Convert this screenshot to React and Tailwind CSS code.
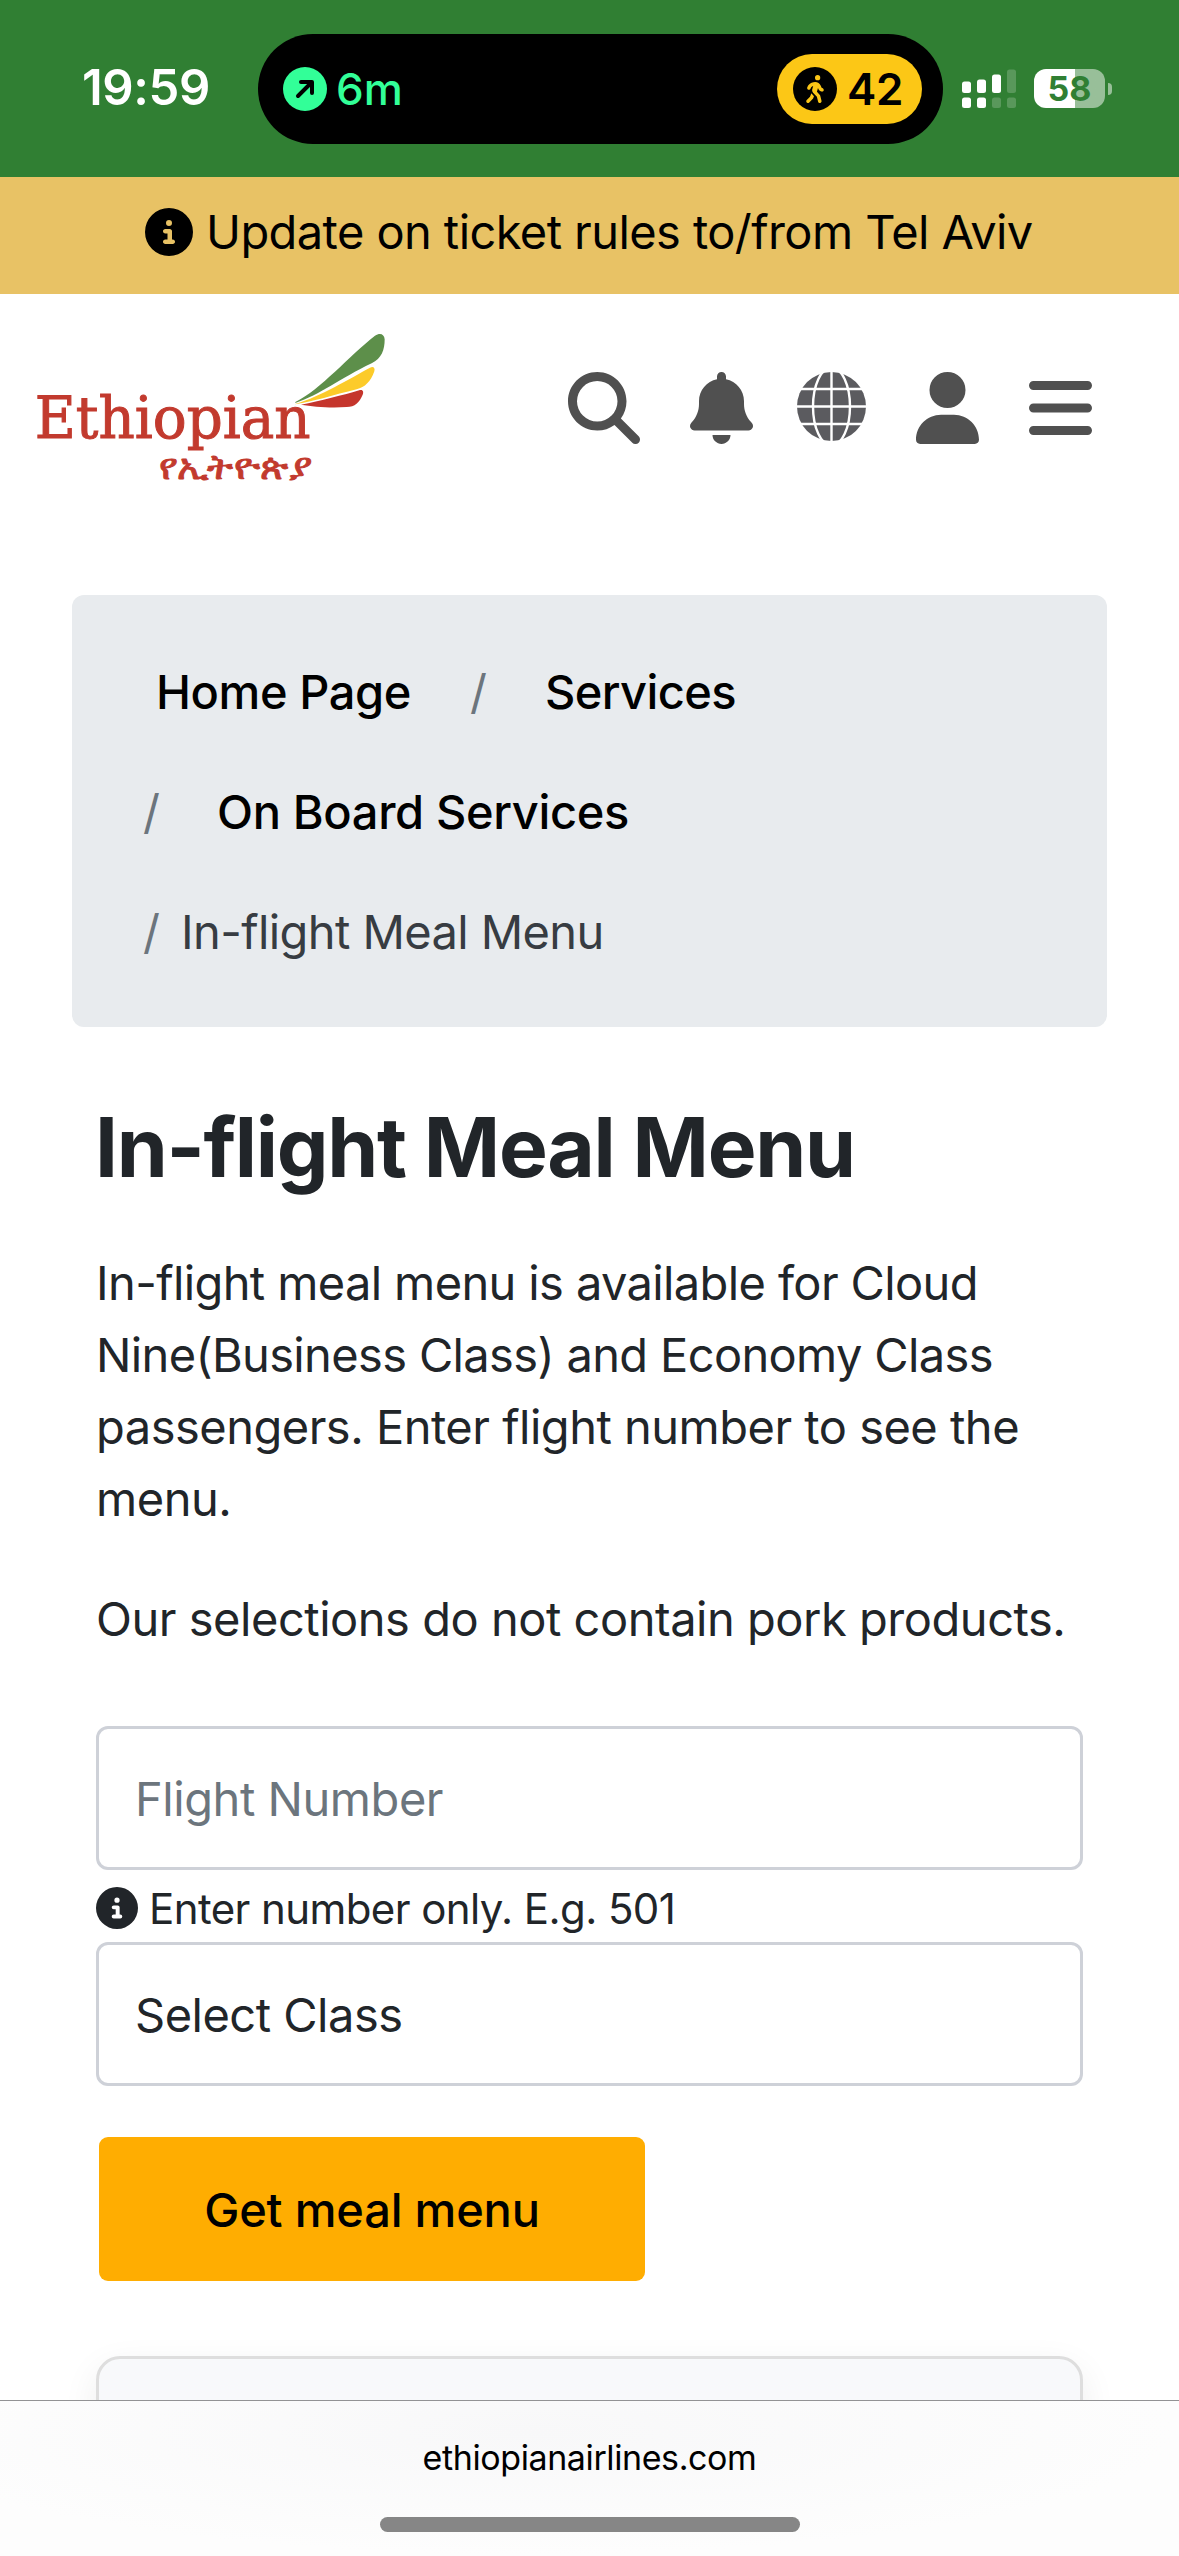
import { FaBars, FaBell, FaCircleInfo, FaMagnifyingGlass, FaPersonWalking, FaUser } from 'react-icons/fa6';

function SignalIcon() {
  return (
    <svg width="54" height="40" viewBox="0 0 54 40" fill="#fff" className="ml-[19px]">
      <rect x="0" y="12.5" width="9" height="11.5" rx="2.5" />
      <rect x="15" y="10.5" width="9" height="13.5" rx="2.5" />
      <rect x="30" y="5.5" width="9" height="18.5" rx="2.5" />
      <rect x="45" y="0.5" width="9" height="23.5" rx="2.5" opacity="0.2" />
      <rect x="0" y="28.5" width="9" height="10.5" rx="2.5" />
      <rect x="15" y="28.5" width="9" height="10.5" rx="2.5" />
      <rect x="30" y="28.5" width="9" height="10.5" rx="2.5" opacity="0.2" />
      <rect x="45" y="28.5" width="9" height="10.5" rx="2.5" opacity="0.2" />
    </svg>
  );
}

function StatusBar() {
  return (
    <div className="flex h-[177px] shrink-0 items-center bg-[#307f33]">
      <div className="w-[258px] pb-[2px] pl-[82px] text-[49px] leading-none font-semibold tracking-[-0.4px] text-white">19:59</div>

      <div className="mt-px flex h-[110px] w-[685px] items-center justify-between rounded-full bg-black pr-[21px] pl-[25px]">
        <div className="flex items-center gap-[9px]">
          <div className="flex h-[44px] w-[44px] items-center justify-center rounded-full bg-[#32ff98]">
            <svg width="20" height="20" viewBox="0 0 20 20" fill="none" stroke="#000" strokeWidth="4" strokeLinecap="round" strokeLinejoin="round">
              <path d="M3 17L16.5 3.5M6 3H17V14" />
            </svg>
          </div>
          <span className="text-[44px] leading-none font-medium text-[#32ff98]">6m</span>
        </div>
        <div className="flex h-[70px] w-[145px] items-center gap-[10px] rounded-full bg-[#fcc716] pl-[16px]">
          <div className="flex h-[44px] w-[44px] items-center justify-center rounded-full bg-black text-[#fcc716]">
            <FaPersonWalking size={28} />
          </div>
          <span className="text-[44px] leading-none font-semibold tracking-[-0.3px] text-black">42</span>
        </div>
      </div>

      <SignalIcon />

      <div className="ml-[18px] flex h-[39px] w-[71px] items-center justify-center rounded-[12px] bg-linear-to-r from-white from-58% to-[#98bf99] to-58% text-[34px] leading-none font-bold text-[#307f33]">
        58
      </div>
      <div className="ml-[3px] h-[12px] w-[4px] rounded-r-full bg-[#98bf99]" />
    </div>
  );
}

function Logo() {
  return (
    <svg width="360" height="160" viewBox="90 90 1080 480">
      <path fill="#5d8f4a" d="M886 306C960 270 1050 165 1125 107C1140 97 1153 102 1154 118C1154 150 1145 175 1115 190C1020 235 960 285 886 309Z" />
      <path fill="#fccb2a" d="M886 312C960 290 1050 235 1110 203C1120 198 1126 204 1123 214C1112 245 1095 262 1070 268C1000 285 940 305 886 313Z" />
      <path fill="#c5352c" d="M903 314C960 303 1030 285 1080 270C1090 268 1091 277 1088 284C1078 308 1065 320 1040 321C990 325 940 320 903 314Z" />
      <text x="104" y="415" textLength="828" lengthAdjust="spacingAndGlyphs" className="fill-[#c23a2e] stroke-[#c23a2e] stroke-3 font-['DejaVu_Serif',serif] text-[171px]">Ethiopian</text>
      <text x="476" y="537" textLength="459" lengthAdjust="spacingAndGlyphs" className="fill-[#c23a2e] stroke-[#c23a2e] stroke-3 font-['Noto_Sans',sans-serif] text-[106px]">የኢትዮጵያ</text>
    </svg>
  );
}

function GlobeIcon() {
  return (
    <svg width="69" height="69" viewBox="0 0 69 69" className="mb-[3px] ml-[44px]">
      <circle cx="34.5" cy="34.5" r="34.5" fill="#5b5b5f" />
      <g fill="none" stroke="#fff" strokeWidth="2.4">
        <path d="M34.5 0V69M0 17H69M0 34.5H69M0 52H69" />
        <ellipse cx="34.5" cy="34.5" rx="18.5" ry="39" />
      </g>
    </svg>
  );
}

function Header() {
  return (
    <div className="flex h-[301px] shrink-0 items-start pt-[36px] pr-[87px] pl-[30px]">
      <Logo />
      <div className="mt-[42px] ml-auto flex items-center text-[#505050]">
        <FaMagnifyingGlass size={72} />
        <FaBell className="ml-[50px] h-[72px] w-[63px]" />
        <GlobeIcon />
        <FaUser className="ml-[50px] h-[72px] w-[63px]" />
        <FaBars className="ml-[50px] h-[72px] w-[63px]" />
      </div>
    </div>
  );
}

function Breadcrumb() {
  return (
    <nav className="mx-[72px] rounded-[12px] bg-[#e8ebee] pt-[37px] pb-[35px] text-[47px] leading-[120px] font-medium text-black">
      <div className="flex pl-[84px]">
        <span className="w-[314px] tracking-[-0.4px]">Home Page</span>
        <span className="w-[75px] font-normal text-[#6c757d]">/</span>
        <span className="tracking-[-0.6px]">Services</span>
      </div>
      <div className="flex pl-[71px]">
        <span className="w-[74px] font-normal text-[#6c757d]">/</span>
        <span className="tracking-[-0.35px]">On Board Services</span>
      </div>
      <div className="flex pl-[71px] font-normal">
        <span className="w-[38px] text-[#6c757d]">/</span>
        <span className="tracking-[-0.6px] text-[#373c42]">In-flight Meal Menu</span>
      </div>
    </nav>
  );
}

function MealForm() {
  return (
    <div>
      <div className="flex h-[144px] items-center rounded-[12px] border-3 border-[#ced1d8] pt-[2px] pl-[36px] text-[47px] tracking-[-0.45px] text-[#6c757d]">
        Flight Number
      </div>
      <div className="flex h-[72px] items-center gap-[11px] pt-[4px] text-[42px] leading-none tracking-[-0.58px]">
        <FaCircleInfo size={42} />
        <span className="pt-[2px]">Enter number only. E.g. 501</span>
      </div>
      <div className="flex h-[144px] items-center rounded-[12px] border-3 border-[#ced1d8] pt-[2px] pl-[36px] text-[47px] tracking-[-0.5px]">
        Select Class
      </div>
      <button className="mt-[51px] ml-[3px] block h-[144px] w-[546px] rounded-[9px] bg-[#ffad01] pt-[3px] text-[47px] font-medium tracking-[-0.2px] text-black">
        Get meal menu
      </button>
    </div>
  );
}

export default function App() {
  return (
    <div className="flex h-[2556px] w-[1179px] flex-col overflow-hidden bg-white font-['Inter',sans-serif] text-[#212529]">
      <StatusBar />

      <div className="flex h-[117px] shrink-0 items-center gap-[13px] bg-[#e8c265] pb-[7px] pl-[145px] text-[47px] tracking-[-0.58px] text-black">
        <FaCircleInfo size={48} className="-mt-px" />
        <span className="pt-px">Update on ticket rules to/from Tel Aviv</span>
      </div>

      <main className="flex-1 overflow-hidden">
        <Header />
        <Breadcrumb />

        <div className="px-[96px] pt-[71px]">
          <h1 className="-ml-px text-[82px] leading-[100px] font-bold tracking-[-1.3px]">In-flight Meal Menu</h1>
          <div className="pt-[49px] pb-[71px] text-[47px] leading-[72px] tracking-[-0.47px]">
            <p>
              <span className="tracking-[-0.62px]">In-flight meal menu is available for Cloud</span><br />
              <span className="tracking-[-0.64px]">Nine(Business Class) and Economy Class</span><br />
              <span className="tracking-[-0.5px]">passengers. Enter flight number to see the</span><br />
              menu.
            </p>
            <p className="mt-[48px] whitespace-nowrap">Our selections do not contain pork products.</p>
          </div>
          <MealForm />
          <div className="mt-[75px] h-[200px] rounded-[24px] border-3 border-[#dedede] bg-[#f8f9fb] shadow-[0_12px_36px_rgba(0,0,0,0.07)]" />
        </div>
      </main>

      <footer className="flex h-[156px] shrink-0 flex-col items-center border-t border-[#929294] bg-radial-[at_45%_20%] from-[#f8f8f9] to-[#fdfdfd] to-70%">
        <div className="h-[116px] pt-[40px] text-[34px] leading-[34px] tracking-[-0.4px] text-black">ethiopianairlines.com</div>
        <div className="h-[15px] w-[420px] shrink-0 rounded-full bg-[#868686]" />
      </footer>
    </div>
  );
}
